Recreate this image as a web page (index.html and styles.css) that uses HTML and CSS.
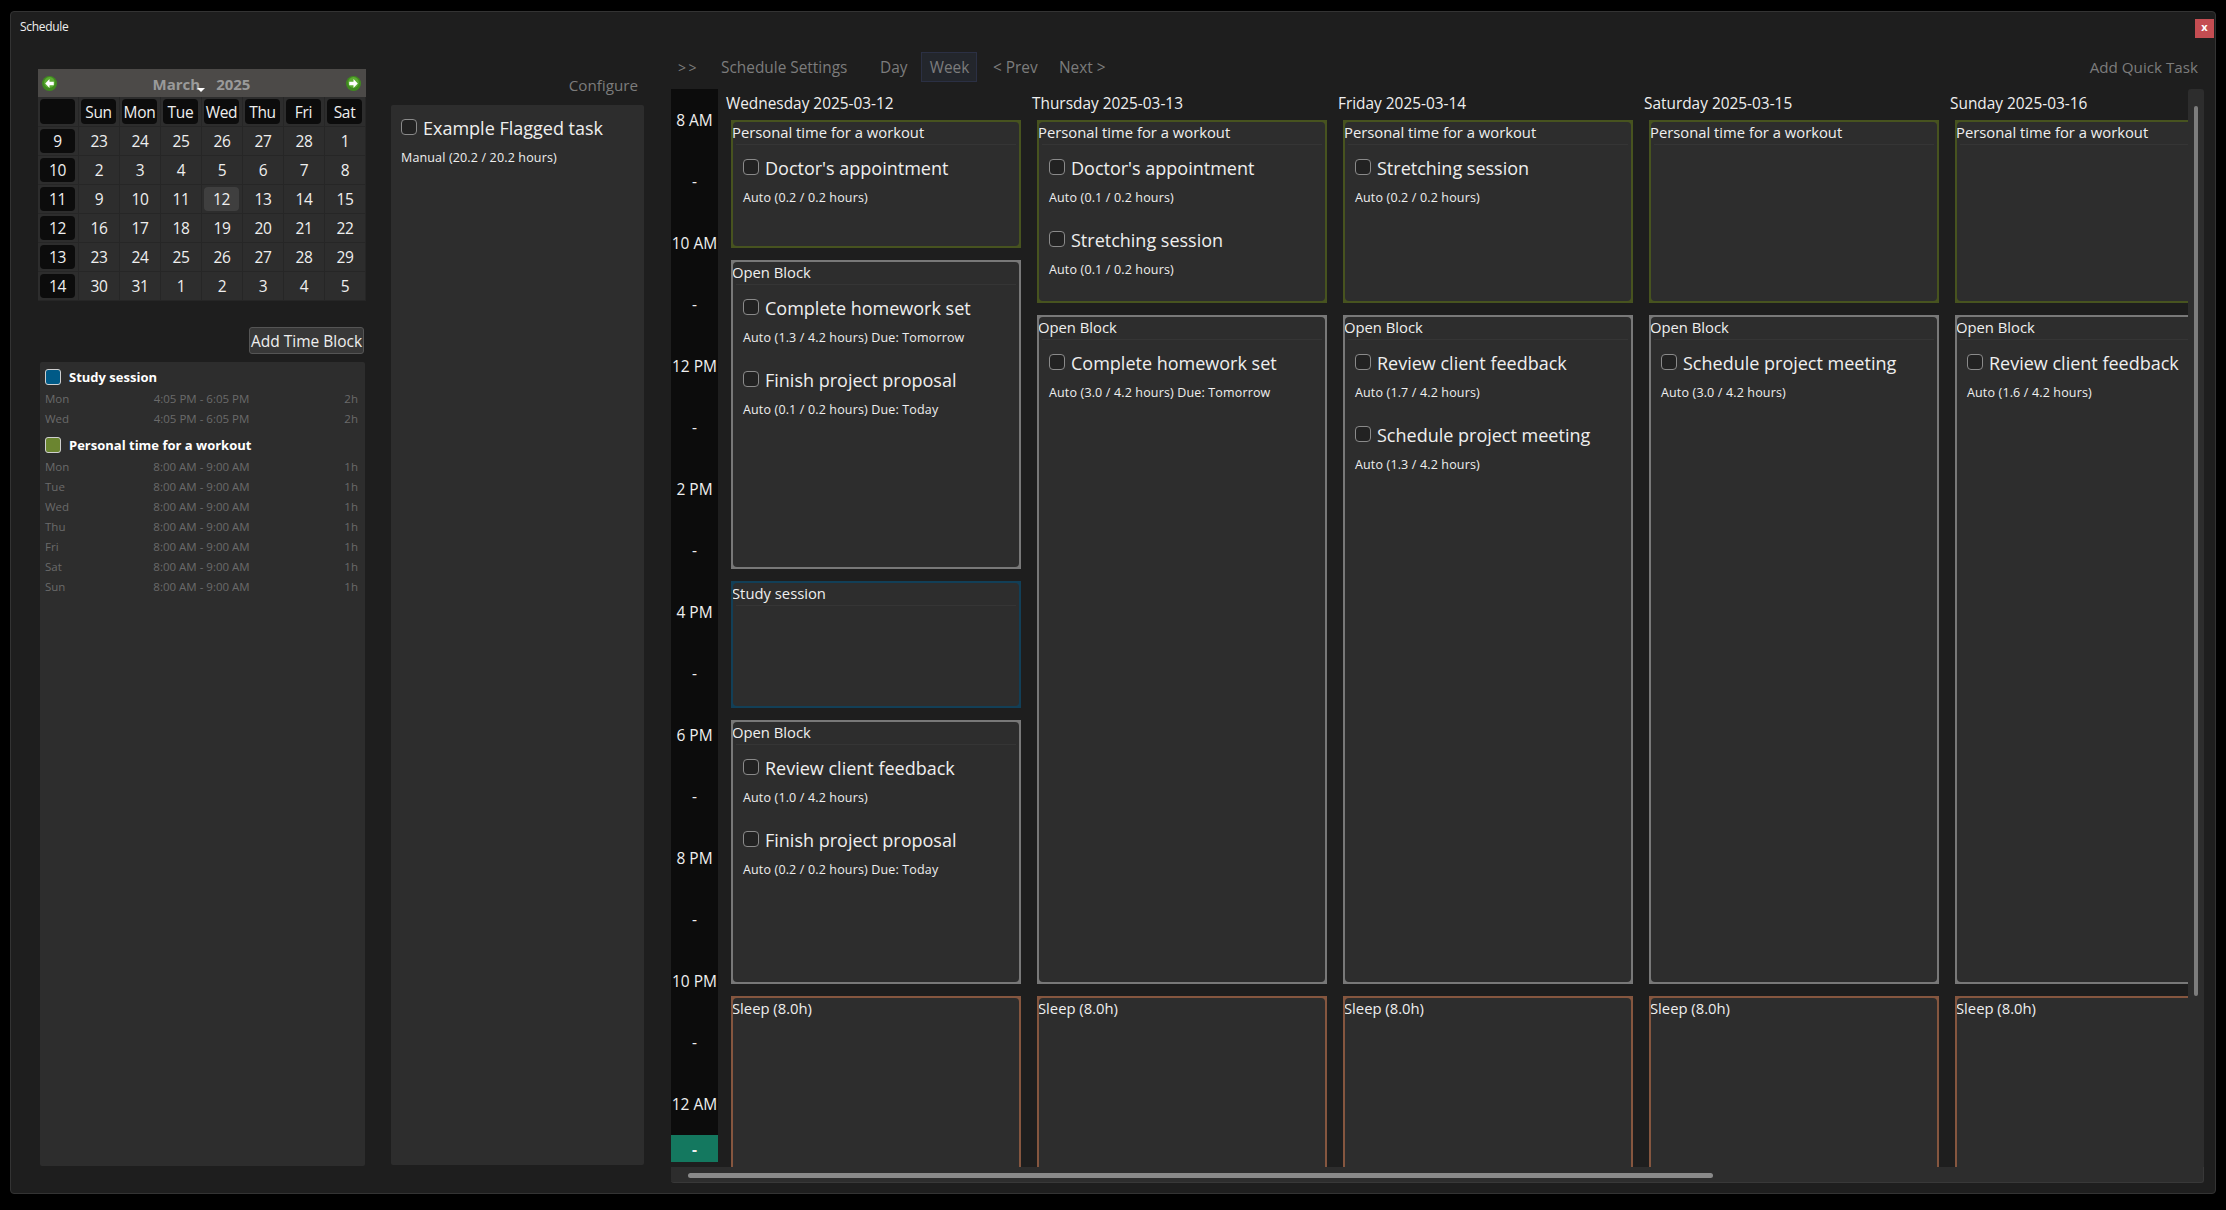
FILE: index.html
```html
<!DOCTYPE html>
<html lang="en">
<head>
<meta charset="utf-8">
<title>Schedule</title>
<link rel="stylesheet" href="styles.css">
</head>
<body>
<div class="window">
  <header class="titlebar">
    <span class="app-title">Schedule</span>
    <button class="close">x</button>
  </header>
  <div class="content">
    <aside class="left">
      <div class="cal">
        <div class="cal-head">
          <svg class="nav" viewBox="0 0 14 14"><circle cx="7" cy="7" r="7" fill="#3f8a1f"/><circle cx="7" cy="6" r="5" fill="#5dac33"/><path d="M7 2.8 3 7l4 4.2V8.6h4V5.4H7z" fill="#fff"/></svg>
          <span class="cal-title">March<i class="caret"></i><span class="year">2025</span></span>
          <svg class="nav" viewBox="0 0 14 14"><circle cx="7" cy="7" r="7" fill="#3f8a1f"/><circle cx="7" cy="6" r="5" fill="#5dac33"/><path d="M7 2.8 11 7l-4 4.2V8.6H3V5.4h4z" fill="#fff"/></svg>
        </div>
        <div class="cal-grid">
          <div class="c dow"><span></span></div><div class="c dow"><span>Sun</span></div><div class="c dow"><span>Mon</span></div><div class="c dow"><span>Tue</span></div><div class="c dow"><span>Wed</span></div><div class="c dow"><span>Thu</span></div><div class="c dow"><span>Fri</span></div><div class="c dow"><span>Sat</span></div>
          <div class="c wk"><span>9</span></div><div class="c">23</div><div class="c">24</div><div class="c">25</div><div class="c">26</div><div class="c">27</div><div class="c">28</div><div class="c">1</div>
          <div class="c wk"><span>10</span></div><div class="c">2</div><div class="c">3</div><div class="c">4</div><div class="c">5</div><div class="c">6</div><div class="c">7</div><div class="c">8</div>
          <div class="c wk"><span>11</span></div><div class="c">9</div><div class="c">10</div><div class="c">11</div><div class="c today"><span>12</span></div><div class="c">13</div><div class="c">14</div><div class="c">15</div>
          <div class="c wk"><span>12</span></div><div class="c">16</div><div class="c">17</div><div class="c">18</div><div class="c">19</div><div class="c">20</div><div class="c">21</div><div class="c">22</div>
          <div class="c wk"><span>13</span></div><div class="c">23</div><div class="c">24</div><div class="c">25</div><div class="c">26</div><div class="c">27</div><div class="c">28</div><div class="c">29</div>
          <div class="c wk"><span>14</span></div><div class="c">30</div><div class="c">31</div><div class="c">1</div><div class="c">2</div><div class="c">3</div><div class="c">4</div><div class="c">5</div>
        </div>
      </div>
      <div class="add-row"><button class="add-btn">Add Time Block</button></div>
      <div class="blocks-panel">
        <div class="tb-head"><i class="swatch blue"></i><b>Study session</b></div>
        <div class="tb-row"><span>Mon</span><span>4:05 PM - 6:05 PM</span><span>2h</span></div>
        <div class="tb-row"><span>Wed</span><span>4:05 PM - 6:05 PM</span><span>2h</span></div>
        <div class="tb-head second"><i class="swatch olive"></i><b>Personal time for a workout</b></div>
        <div class="tb-row"><span>Mon</span><span>8:00 AM - 9:00 AM</span><span>1h</span></div>
        <div class="tb-row"><span>Tue</span><span>8:00 AM - 9:00 AM</span><span>1h</span></div>
        <div class="tb-row"><span>Wed</span><span>8:00 AM - 9:00 AM</span><span>1h</span></div>
        <div class="tb-row"><span>Thu</span><span>8:00 AM - 9:00 AM</span><span>1h</span></div>
        <div class="tb-row"><span>Fri</span><span>8:00 AM - 9:00 AM</span><span>1h</span></div>
        <div class="tb-row"><span>Sat</span><span>8:00 AM - 9:00 AM</span><span>1h</span></div>
        <div class="tb-row"><span>Sun</span><span>8:00 AM - 9:00 AM</span><span>1h</span></div>
      </div>
    </aside>
    <section class="flagged">
      <div class="configure">Configure</div>
      <div class="flagged-panel">
        <div class="task"><div class="task-line"><i class="check"></i><span>Example Flagged task</span></div><div class="task-sub">Manual (20.2 / 20.2 hours)</div></div>
      </div>
    </section>
    <main class="sched">
      <nav class="toolbar">
        <span class="tool arrows">&gt;&gt;</span>
        <span class="tool settings">Schedule Settings</span>
        <span class="tool day">Day</span>
        <span class="tool week">Week</span>
        <span class="tool prev">&lt; Prev</span>
        <span class="tool next">Next &gt;</span>
        <span class="tool quick">Add Quick Task</span>
      </nav>
      <div class="scroller">
        <div class="view">
          <div class="times">
            <div class="t">8 AM</div><div class="t">-</div><div class="t">10 AM</div><div class="t">-</div><div class="t">12 PM</div><div class="t">-</div><div class="t">2 PM</div><div class="t">-</div><div class="t">4 PM</div><div class="t">-</div><div class="t">6 PM</div><div class="t">-</div><div class="t">8 PM</div><div class="t">-</div><div class="t">10 PM</div><div class="t">-</div><div class="t">12 AM</div>
            <div class="t now">-</div>
          </div>
          <div class="day-col">
            <div class="day-head">Wednesday 2025-03-12</div>
            <div class="block personal h128"><div class="inner"><div class="b-title">Personal time for a workout</div>
              <div class="task"><div class="task-line"><i class="check"></i><span>Doctor's appointment</span></div><div class="task-sub">Auto (0.2 / 0.2 hours)</div></div>
            </div></div>
            <div class="block open h309"><div class="inner"><div class="b-title">Open Block</div>
              <div class="task"><div class="task-line"><i class="check"></i><span>Complete homework set</span></div><div class="task-sub">Auto (1.3 / 4.2 hours) Due: Tomorrow</div></div>
              <div class="task"><div class="task-line"><i class="check"></i><span>Finish project proposal</span></div><div class="task-sub">Auto (0.1 / 0.2 hours) Due: Today</div></div>
            </div></div>
            <div class="block study h127"><div class="inner"><div class="b-title">Study session</div></div></div>
            <div class="block open h264"><div class="inner"><div class="b-title">Open Block</div>
              <div class="task"><div class="task-line"><i class="check"></i><span>Review client feedback</span></div><div class="task-sub">Auto (1.0 / 4.2 hours)</div></div>
              <div class="task"><div class="task-line"><i class="check"></i><span>Finish project proposal</span></div><div class="task-sub">Auto (0.2 / 0.2 hours) Due: Today</div></div>
            </div></div>
            <div class="block sleep h492"><div class="inner"><div class="b-title bare">Sleep (8.0h)</div></div></div>
          </div>
          <div class="day-col">
            <div class="day-head">Thursday 2025-03-13</div>
            <div class="block personal h183"><div class="inner"><div class="b-title">Personal time for a workout</div>
              <div class="task"><div class="task-line"><i class="check"></i><span>Doctor's appointment</span></div><div class="task-sub">Auto (0.1 / 0.2 hours)</div></div>
              <div class="task"><div class="task-line"><i class="check"></i><span>Stretching session</span></div><div class="task-sub">Auto (0.1 / 0.2 hours)</div></div>
            </div></div>
            <div class="block open h669"><div class="inner"><div class="b-title">Open Block</div>
              <div class="task"><div class="task-line"><i class="check"></i><span>Complete homework set</span></div><div class="task-sub">Auto (3.0 / 4.2 hours) Due: Tomorrow</div></div>
            </div></div>
            <div class="block sleep h492"><div class="inner"><div class="b-title bare">Sleep (8.0h)</div></div></div>
          </div>
          <div class="day-col">
            <div class="day-head">Friday 2025-03-14</div>
            <div class="block personal h183"><div class="inner"><div class="b-title">Personal time for a workout</div>
              <div class="task"><div class="task-line"><i class="check"></i><span>Stretching session</span></div><div class="task-sub">Auto (0.2 / 0.2 hours)</div></div>
            </div></div>
            <div class="block open h669"><div class="inner"><div class="b-title">Open Block</div>
              <div class="task"><div class="task-line"><i class="check"></i><span>Review client feedback</span></div><div class="task-sub">Auto (1.7 / 4.2 hours)</div></div>
              <div class="task"><div class="task-line"><i class="check"></i><span>Schedule project meeting</span></div><div class="task-sub">Auto (1.3 / 4.2 hours)</div></div>
            </div></div>
            <div class="block sleep h492"><div class="inner"><div class="b-title bare">Sleep (8.0h)</div></div></div>
          </div>
          <div class="day-col">
            <div class="day-head">Saturday 2025-03-15</div>
            <div class="block personal h183"><div class="inner"><div class="b-title">Personal time for a workout</div></div></div>
            <div class="block open h669"><div class="inner"><div class="b-title">Open Block</div>
              <div class="task"><div class="task-line"><i class="check"></i><span>Schedule project meeting</span></div><div class="task-sub">Auto (3.0 / 4.2 hours)</div></div>
            </div></div>
            <div class="block sleep h492"><div class="inner"><div class="b-title bare">Sleep (8.0h)</div></div></div>
          </div>
          <div class="day-col">
            <div class="day-head">Sunday 2025-03-16</div>
            <div class="block personal h183"><div class="inner"><div class="b-title">Personal time for a workout</div></div></div>
            <div class="block open h669"><div class="inner"><div class="b-title">Open Block</div>
              <div class="task"><div class="task-line"><i class="check"></i><span>Review client feedback</span></div><div class="task-sub">Auto (1.6 / 4.2 hours)</div></div>
            </div></div>
            <div class="block sleep h492"><div class="inner"><div class="b-title bare">Sleep (8.0h)</div></div></div>
          </div>
        </div>
        <div class="vtrack"><div class="vthumb"></div></div>
        <div class="htrack"><div class="hthumb"></div></div>
        <div class="corner"></div>
      </div>
    </main>
  </div>
</div>
</body>
</html>
```
FILE: styles.css
```css
* { box-sizing: border-box; }
html, body { margin: 0; height: 100%; background: #000; overflow: hidden; }
body { padding: 11px 0 0 10px; font-family: "Open Sans", "Noto Sans", sans-serif; color: #efefef; }
.window { width: 2206px; height: 1183px; background: #1e1e1e; border: 1px solid #333; border-radius: 4px; display: flex; flex-direction: column; overflow: hidden; }

.titlebar { flex: none; height: 38px; display: flex; justify-content: space-between; align-items: flex-start; padding: 7px 1px 0 9px; }
.app-title { font-size: 12px; line-height: 16px; letter-spacing: -0.3px; }
.close { width: 19px; height: 19px; padding: 0 0 3px; background: #c44d52; color: #fff; border: 0; font: bold 11px/16px "Open Sans", sans-serif; }

.content { flex: 1; display: flex; min-height: 0; }

.left { flex: none; width: 328px; margin: 19px 0 0 27px; display: flex; flex-direction: column; }
.cal { background: #2d2d2d; height: 232px; }
.cal-head { height: 28px; background: #4c4a48; display: flex; justify-content: space-between; align-items: flex-start; padding: 7px 5px 0 4px; }
.nav { width: 15px; height: 15px; }
.cal-title { font-size: 15px; font-weight: 700; color: #9a9a9a; line-height: 16px; position: relative; }
.caret { position: absolute; left: 44px; top: 12px; border: 4px solid transparent; border-top-color: #fff; border-bottom: 0; width: 0; height: 0; }
.year { margin-left: 16px; }
.cal-grid { display: grid; grid-template-columns: repeat(8, 41px); grid-template-rows: 30px repeat(6, 29px); }
.c { display: flex; align-items: center; justify-content: center; font-size: 15.5px; letter-spacing: -0.3px; border-right: 1px solid #262626; border-bottom: 1px solid #262626; }
.dow, .wk, .today { padding: 0 3px 0 2px; }
.c span { width: 36px; height: 24px; display: flex; align-items: center; justify-content: center; border-radius: 4px; }
.dow span, .wk span { background: #0c0c0c; }
.dow span { height: 25px; }
.today span { background: #3f3f3f; }

.add-row { height: 61px; display: flex; justify-content: flex-end; padding: 26px 2px 0 0; }
.add-btn { width: 115px; height: 27px; padding: 0; background: #383838; border: 1px solid #555; border-radius: 3px; color: #efefef; font: 15.5px/24px "Open Sans", sans-serif; white-space: nowrap; }

.blocks-panel { flex: none; height: 804px; margin: 0 1px 0 2px; background: #2d2d2d; border-radius: 2px; padding: 7px 7px 0 5px; }
.tb-head { height: 16px; display: flex; align-items: center; gap: 8px; font-size: 13px; color: #fff; }
.tb-head.second { margin-top: 9px; }
.tb-head b { font-weight: 700; }
.swatch { width: 16px; height: 16px; border: 1px solid #cfcfcf; border-radius: 3px; }
.blue { background: #005a87; }
.olive { background: #6b8530; }
.tb-row { height: 20px; display: grid; grid-template-columns: 1fr auto 1fr; align-items: center; font-size: 11.5px; color: #6a6a6a; }
.tb-head + .tb-row { margin-top: 3px; }
.tb-row span:last-child { text-align: right; }

.flagged { flex: none; width: 253px; margin: 0 0 0 25px; display: flex; flex-direction: column; }
.configure { height: 55px; padding: 25px 6px 0 0; font-size: 15.2px; line-height: 20px; text-align: right; color: #7c7c7c; }
.flagged-panel { flex: none; height: 1060px; background: #2d2d2d; border-radius: 2px; }

.task { padding: 11px 0 0 10px; height: 72px; }
.task-line { display: flex; align-items: center; gap: 6px; height: 24px; font-size: 18px; white-space: nowrap; }
.check { flex: none; width: 16px; height: 16px; margin-top: -3px; border: 1px solid #8a8a8a; border-radius: 4px; background: #222; }
.task-sub { margin-top: 10px; font-size: 12.5px; line-height: 16px; letter-spacing: 0.15px; white-space: nowrap; }

.sched { flex: none; width: 1533px; margin: 2px 0 0 27px; display: flex; flex-direction: column; }
.toolbar { flex: none; height: 30px; display: flex; align-items: center; font-size: 15.4px; color: #7c7c7c; }
.tool { white-space: nowrap; }
.arrows { margin-left: 7px; width: 43px; letter-spacing: 2.5px; font-size: 14px; }
.settings { width: 159px; }
.day { width: 41px; }
.week { width: 56px; height: 30px; line-height: 30px; padding-left: 1px; text-align: center; background: #23262c; border: 1px solid #2b3044; margin-right: 16px; }
.prev { width: 65px; }
.next { padding-left: 1px; }
.quick { margin-left: auto; margin-right: 6px; font-size: 15.2px; }

.scroller { flex: none; margin-top: 7px; width: 1533px; height: 1094px; display: grid; grid-template-columns: 1517px 16px; grid-template-rows: 1078px 16px; }
.view { overflow: hidden; display: flex; align-items: flex-start; }
.times { flex: none; width: 47px; height: 1073px; background: #0c0c0c; margin-right: 8px; overflow: hidden; }
.t { height: 61.5px; display: flex; align-items: center; justify-content: center; font-size: 15.5px; white-space: nowrap; }
.t.now { height: 28px; background: #14785f; font-weight: 700; }
.day-col { flex: none; width: 306px; }
.day-head { height: 31px; font-size: 15.4px; line-height: 30px; white-space: nowrap; }
.block { width: 290px; margin: 0 0 12px 5px; padding: 2px; }
.inner { height: 100%; background: #2d2d2d; border-radius: 4px; overflow: hidden; }
.personal { background: #47531f; }
.open { background: #787878; }
.study { background: #123f57; }
.sleep { background: #85563f; }
.h127 { height: 127px; }
.h128 { height: 128px; }
.h183 { height: 183px; }
.h264 { height: 264px; }
.h309 { height: 309px; }
.h669 { height: 669px; }
.h492 { height: 492px; }
.b-title { font-size: 14.8px; line-height: 20px; text-indent: -1px; white-space: nowrap; }
.b-title::after { content: ""; display: block; height: 1px; margin: 2px 3px 0; background: #353535; }
.b-title.bare::after { background: transparent; }

.vtrack { background: #2d2d2d; padding: 17px 0 0 6px; border-top-right-radius: 3px; border-top-left-radius: 3px; }
.vthumb { width: 4px; height: 890px; background: #7c7c7c; border-radius: 2px; }
.htrack { background: #2d2d2d; border-bottom: 1px solid #383838; padding: 6px 0 0 17px; border-bottom-left-radius: 3px; }
.hthumb { width: 1025px; height: 5px; background: #8a8a8a; border-radius: 3px; }
.corner { background: #2d2d2d; border-bottom: 1px solid #383838; border-right: 1px solid #383838; border-bottom-right-radius: 3px; }
```
